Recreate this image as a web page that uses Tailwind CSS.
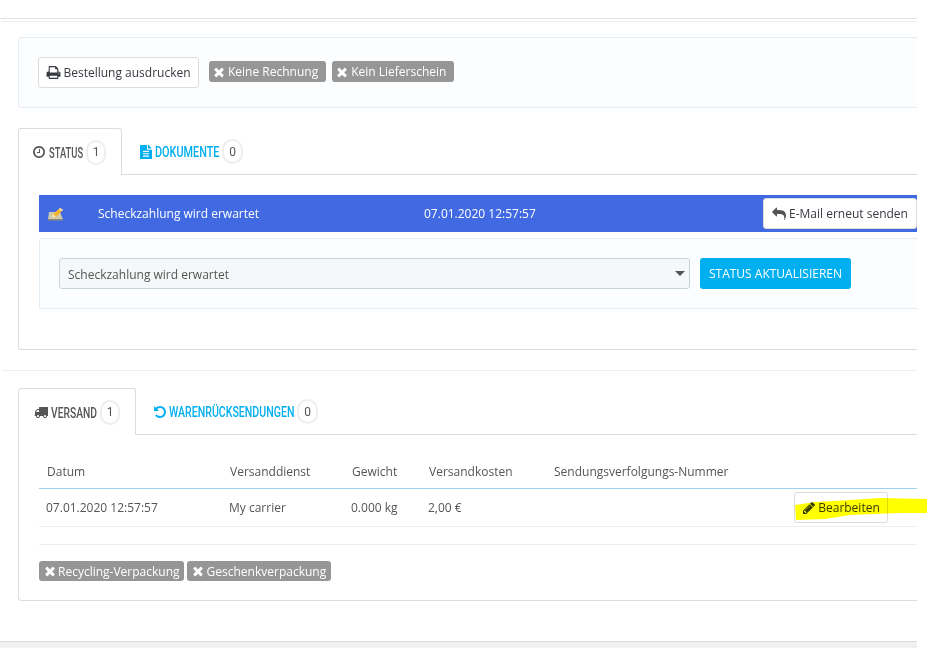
<!DOCTYPE html>
<html><head><meta charset="utf-8"><script src="https://cdn.jsdelivr.net/npm/@tailwindcss/browser@4"></script></head>
<body class="bg-white">
<div class="relative w-[927px] h-[648px] overflow-hidden bg-white font-['Open_Sans',sans-serif] text-[12px] text-[#555]">
<div class="w-[917px] h-[648px] overflow-hidden flex flex-col">
  <div class="mt-[18px] h-[1px] bg-[#e0e0e0] shrink-0"></div>
  <div class="mt-[2px] ml-[2px] h-[1px] bg-[#eeeeee] shrink-0"></div>

  <div class="mt-[15px] ml-[18px] w-[940px] h-[71px] shrink-0 flex items-start pl-[19px] pt-[19px] bg-[#fcfdfe] border border-[#e3ebf3] rounded-[3px]">
    <button class="h-[31px] w-[161px] flex items-center justify-center gap-[2px] bg-white border border-[#dcdcdc] rounded-[3px] text-[#363a41] leading-none">
      <svg class="w-[15px] h-[15px] fill-[#363a41]" viewBox="0 0 1792 1792"><path d="M448 1536h896v-256h-896v256zm0-640h896v-384h-160q-40 0-68-28t-28-68v-160h-640v640zm1152 64q0-26-19-45t-45-19-45 19-19 45 19 45 45 19 45-19 19-45zm128 0v416q0 13-9.5 22.5t-22.5 9.5h-224v160q0 40-28 68t-68 28h-960q-40 0-68-28t-28-68v-160h-224q-13 0-22.5-9.5t-9.5-22.5v-416q0-79 56.5-135.5t135.5-56.5h64v-544q0-40 28-68t68-28h672q40 0 88 20t76 48l152 152q28 28 48 76t20 88v256h64q79 0 135.5 56.5t56.5 135.5z"/></svg>
      Bestellung ausdrucken</button>
    <span class="ml-[10px] mt-[4px] h-[21px] flex items-center gap-[2px] pl-[3px] pr-[8px] bg-[#969696] rounded-[3px] text-white leading-none">
      <svg class="w-[14px] h-[14px] fill-white" viewBox="0 0 1792 1792"><path d="M1490 1322q0 40-28 68l-136 136q-28 28-68 28t-68-28l-294-294-294 294q-28 28-68 28t-68-28l-136-136q-28-28-28-68t28-68l294-294-294-294q-28-28-28-68t28-68l136-136q28-28 68-28t68 28l294 294 294-294q28-28 68-28t68 28l136 136q28 28 28 68t-28 68l-294 294 294 294q28 28 28 68z"/></svg>Keine Rechnung</span>
    <span class="ml-[6px] mt-[4px] h-[21px] flex items-center gap-[2px] pl-[3px] pr-[8px] bg-[#969696] rounded-[3px] text-white leading-none">
      <svg class="w-[14px] h-[14px] fill-white" viewBox="0 0 1792 1792"><path d="M1490 1322q0 40-28 68l-136 136q-28 28-68 28t-68-28l-294-294-294 294q-28 28-68 28t-68-28l-136-136q-28-28-28-68t28-68l294-294-294-294q-28-28-28-68t28-68l136-136q28-28 68-28t68 28l294 294 294-294q28-28 68-28t68 28l136 136q28 28 28 68t-28 68l-294 294 294 294q28 28 28 68z"/></svg>Kein Lieferschein</span>
  </div>

  <div class="mt-[20px] ml-[18px] w-[920px] h-[47px] shrink-0 flex items-end border-b border-[#dcdcdc] font-['Roboto',sans-serif] font-medium text-[14px]">
    <div class="h-[47px] w-[104px] -mb-[1px] pl-[13px] flex items-center gap-[3px] bg-white border border-b-0 border-[#dcdcdc] rounded-t-[3px] text-[#555]">
      <svg class="w-[14px] h-[14px] fill-[#555]" viewBox="0 0 1792 1792"><path d="M1024 544v448q0 14-9 23t-23 9h-320q-14 0-23-9t-9-23v-64q0-14 9-23t23-9h224v-352q0-14 9-23t23-9h64q14 0 23 9t9 23zm416 352q0-148-73-273t-198-198-273-73-273 73-198 198-73 273 73 273 198 198 273 73 273-73 198-198 73-273zm224 0q0 209-103 385.5t-279.5 279.5-385.5 103-385.5-103-279.5-279.5-103-385.5 103-385.5 279.5-279.5 385.5-103 385.5 103 279.5 279.5 103 385.5z"/></svg>
      <span class="w-[34px] pt-[2px] whitespace-nowrap origin-left scale-x-[0.67]">STATUS</span>
      <span class="w-[20px] h-[25px] flex items-center justify-center rounded-full border-2 border-[#eeeeee] text-[12px] font-normal">1</span>
    </div>
    <div class="h-[47px] -mb-[1px] pl-[18px] flex items-center gap-[3px] text-[#00aff0]">
      <svg class="w-[12px] h-[14px] fill-[#00aff0]" viewBox="128 128 1536 1536" preserveAspectRatio="none"><path d="M1596 476q14 14 28 36h-472v-472q22 14 36 28zm-476 164h544v1056q0 40-28 68t-68 28h-1344q-40 0-68-28t-28-68v-1600q0-40 28-68t68-28h800v544q0 40 28 68t68 28zm160 736v-64q0-14-9-23t-23-9h-704q-14 0-23 9t-9 23v64q0 14 9 23t23 9h704q14 0 23-9t9-23zm0-256v-64q0-14-9-23t-23-9h-704q-14 0-23 9t-9 23v64q0 14 9 23t23 9h704q14 0 23-9t9-23zm0-256v-64q0-14-9-23t-23-9h-704q-14 0-23 9t-9 23v64q0 14 9 23t23 9h704q14 0 23-9t9-23z"/></svg>
      <span class="w-[64px] pt-[2px] whitespace-nowrap origin-left scale-x-[0.775]">DOKUMENTE</span>
      <span class="w-[21px] h-[25px] flex items-center justify-center rounded-full border-2 border-[#eeeeee] text-[#555] text-[12px] font-normal">0</span>
    </div>
  </div>
  <div class="ml-[18px] w-[920px] h-[175px] shrink-0 px-[20px] pt-[20px] bg-white border-l border-b border-[#dcdcdc] rounded-bl-[3px]">
    <div class="h-[37px] flex items-center bg-[#4169e1] text-white relative">
      <svg class="ml-[8px] w-[17px] h-[14px]" viewBox="0 0 17 14"><path d="M2 5h11l3 7.500H1z" fill="#cfc9ae"/><path d="M1 12h15v1.500H1z" fill="#8d8a78"/><path d="M5 10l1-3 7-6 3 2-7 7z" fill="#f2b632"/><path d="M5 10l1-3 3 3z" fill="#fde9b5"/><path d="M13 1l3 2-1 1-3-2z" fill="#f5e6c8"/></svg>
      <span class="ml-[34px] w-[326px]">Scheckzahlung wird erwartet</span>
      <span>07.01.2020 12:57:57</span>
      <button class="absolute right-[1px] top-[3px] w-[154px] h-[31px] flex items-center justify-center gap-[3px] bg-white border border-[#dcdcdc] rounded-[3px] text-[#363a41] leading-none">
        <svg class="w-[14px] h-[14px] fill-[#555]" viewBox="0 0 1792 1792"><path d="M1792 1120q0 166-127 451-3 7-10.500 24t-13.500 30-13 22q-12 17-28 17-15 0-23.500-10t-8.500-25q0-9 2.500-26.500t2.500-23.500q5-68 5-123 0-101-17.500-181t-48.500-138.500-80-101-105.500-69.500-133-42.500-154-21.500-175.500-6h-224v256q0 26-19 45t-45 19-45-19l-512-512q-19-19-19-45t19-45l512-512q19-19 45-19t45 19 19 45v256h224q713 0 875 403 53 134 53 333z"/></svg>
        E-Mail erneut senden</button>
    </div>
    <div class="mt-[6px] h-[71px] flex items-start pl-[19px] pt-[19px] bg-[#fcfdfe] border border-[#e3ebf3] rounded-t-[3px]">
      <div class="w-[631px] h-[31px] flex items-center justify-between pl-[8px] pr-[4px] bg-[#f5f8f9] border border-[#c7d6db] rounded-[3px] text-[#555]">
        <span class="pt-[2px]">Scheckzahlung wird erwartet</span>
        <span class="w-0 h-0 border-x-[5px] border-x-transparent border-t-[5px] border-t-[#555]"></span>
      </div>
      <button class="ml-[10px] w-[151px] h-[31px] flex items-center justify-center bg-[#00aff0] rounded-[3px] text-white leading-none">STATUS AKTUALISIEREN</button>
    </div>
  </div>

  <div class="mt-[20px] h-[1px] bg-[#eeeeee] ml-[2px] shrink-0"></div>

  <div class="mt-[17px] ml-[18px] w-[920px] h-[47px] shrink-0 flex items-end border-b border-[#dcdcdc] font-['Roboto',sans-serif] font-medium text-[14px]">
    <div class="h-[47px] w-[118px] -mb-[1px] pl-[15px] flex items-center gap-[3px] bg-white border border-b-0 border-[#dcdcdc] rounded-t-[3px] text-[#555]">
      <svg class="w-[14px] h-[14px] fill-[#555]" viewBox="0 0 1792 1792"><path d="M640 1408q0-52-38-90t-90-38-90 38-38 90 38 90 90 38 90-38 38-90zm-384-512h384v-256h-158q-13 0-22 9l-195 195q-9 9-9 22v30zm1280 512q0-52-38-90t-90-38-90 38-38 90 38 90 90 38 90-38 38-90zm256-1088v1024q0 15-4 26.500t-13.500 18.500-16.500 11.500-23.500 6-22.500 2-25.500 0-22.500-.5q0 106-75 181t-181 75-181-75-75-181h-384q0 106-75 181t-181 75-181-75-75-181h-64q-3 0-22.500.5t-25.500 0-22.500-2-23.500-6-16.500-11.500-13.500-18.500-4-26.500q0-26 19-45t45-19v-320q0-8-.5-35t0-38 2.500-34.500 6.500-37 14-30.500 22.500-30l198-198q19-19 50.500-32t58.500-13h160v-192q0-26 19-45t45-19h1024q26 0 45 19t19 45z"/></svg>
      <span class="w-[46px] pt-[2px] whitespace-nowrap origin-left scale-x-[0.735]">VERSAND</span>
      <span class="w-[20px] h-[25px] flex items-center justify-center rounded-full border-2 border-[#eeeeee] text-[12px] font-normal">1</span>
    </div>
    <div class="h-[47px] -mb-[1px] pl-[18px] flex items-center gap-[3px] text-[#00aff0]">
      <svg class="w-[12px] h-[12px] fill-[#00aff0]" viewBox="128 128 1536 1536"><path d="M1664 896q0 156-61 298t-164 245-245 164-298 61q-172 0-327-72.500t-264-204.500q-7-10-6.500-22.500t8.500-20.500l137-138q10-9 25-9 16 2 23 12 73 95 179 147t225 52q104 0 198.500-40.500t163.500-109.500 109.500-163.500 40.500-198.500-40.500-198.500-109.500-163.500-163.500-109.500-198.500-40.500q-98 0-188 35.500t-160 101.500l137 138q31 30 14 69-17 40-59 40h-448q-26 0-45-19t-19-45v-448q0-42 40-59 39-17 69 14l130 129q107-101 244.500-156.500t284.500-55.500q156 0 298 61t245 164 164 245 61 298z"/></svg>
      <span class="w-[126px] pt-[2px] whitespace-nowrap origin-left scale-x-[0.756]">WARENRÜCKSENDUNGEN</span>
      <span class="-ml-[1px] w-[21px] h-[25px] flex items-center justify-center rounded-full border-2 border-[#eeeeee] text-[#555] text-[12px] font-normal">0</span>
    </div>
  </div>
  <div class="ml-[18px] w-[920px] h-[166px] shrink-0 pl-[20px] pr-[21px] bg-white border-l border-b border-[#dcdcdc] rounded-bl-[3px]">
    <table class="w-[878px] table-fixed mt-[17px]">
      <thead><tr class="h-[36px]">
        <th class="w-[183px] pl-[8px] pt-[5px] text-left font-normal border-b border-[#9cd3ee]">Datum</th>
        <th class="w-[122px] pl-[8px] pt-[5px] text-left font-normal border-b border-[#9cd3ee]">Versanddienst</th>
        <th class="w-[77px] pl-[8px] pt-[5px] text-left font-normal border-b border-[#9cd3ee]">Gewicht</th>
        <th class="w-[126px] pl-[8px] pt-[5px] text-left font-normal border-b border-[#9cd3ee]">Versandkosten</th>
        <th class="w-[240px] pl-[7px] pt-[5px] text-left font-normal border-b border-[#9cd3ee]">Sendungsverfolgungs-Nummer</th>
        <th class="border-b border-[#9cd3ee]"></th>
      </tr></thead>
      <tbody><tr class="h-[38px]">
        <td class="pl-[7px] pt-[2px] border-b border-[#eeeeee]">07.01.2020 12:57:57</td>
        <td class="pl-[7px] pt-[2px] border-b border-[#eeeeee]">My carrier</td>
        <td class="pl-[7px] pt-[2px] border-b border-[#eeeeee]">0.000 kg</td>
        <td class="pl-[7px] pt-[2px] border-b border-[#eeeeee]">2,00 €</td>
        <td class="border-b border-[#eeeeee]"></td>
        <td class="pl-[7px] border-b border-[#eeeeee]"><button class="w-[94px] h-[31px] flex items-center justify-center gap-[2px] pt-[2px] bg-white border border-[#dcdcdc] rounded-[3px] text-[#363a41] leading-none">
          <svg class="w-[14px] h-[14px] fill-[#363a41]" viewBox="0 0 1792 1792"><path d="M491 1536l91-91-235-235-91 91v107h128v128h107zm523-928q0-22-22-22-10 0-17 7l-542 542q-7 7-7 17 0 22 22 22 10 0 17-7l542-542q7-7 7-17zm-54-192l416 416-832 832h-416v-416zm683 96q0 53-37 90l-166 166-416-416 166-165q36-38 90-38 53 0 91 38l235 234q37 39 37 91z"/></svg>Bearbeiten</button></td>
      </tr></tbody>
    </table>
    <div class="mt-[17px] h-[1px] bg-[#eeeeee]"></div>
    <div class="mt-[16px] flex gap-[3px]">
      <span class="h-[20px] flex items-center gap-[1px] pl-[4px] pr-[4px] bg-[#969696] rounded-[3px] text-white leading-none">
        <svg class="w-[14px] h-[14px] fill-white" viewBox="0 0 1792 1792"><path d="M1490 1322q0 40-28 68l-136 136q-28 28-68 28t-68-28l-294-294-294 294q-28 28-68 28t-68-28l-136-136q-28-28-28-68t28-68l294-294-294-294q-28-28-28-68t28-68l136-136q28-28 68-28t68 28l294 294 294-294q28-28 68-28t68 28l136 136q28 28 28 68t-28 68l-294 294 294 294q28 28 28 68z"/></svg><span class="pt-[2px]">Recycling-Verpackung</span></span>
      <span class="h-[20px] flex items-center gap-[2px] pl-[4px] pr-[5px] bg-[#969696] rounded-[3px] text-white leading-none">
        <svg class="w-[14px] h-[14px] fill-white" viewBox="0 0 1792 1792"><path d="M1490 1322q0 40-28 68l-136 136q-28 28-68 28t-68-28l-294-294-294 294q-28 28-68 28t-68-28l-136-136q-28-28-28-68t28-68l294-294-294-294q-28-28-28-68t28-68l136-136q28-28 68-28t68 28l294 294 294-294q28-28 68-28t68 28l136 136q28 28 28 68t-28 68l-294 294 294 294q28 28 28 68z"/></svg><span class="pt-[2px]">Geschenkverpackung</span></span>
    </div>
  </div>
  <div class="mt-[40px] h-[1px] bg-[#dcdcdc] shrink-0"></div>
  <div class="grow bg-[#f0f1f3]"></div>
</div>
<svg class="absolute left-0 top-0 w-[927px] h-[648px] mix-blend-multiply pointer-events-none" viewBox="0 0 927 648"><path d="M795 505L815 502C840 501 860 499 880 498L927 499V513L900 513L850 515L825 519L796 520Z" fill="#ffff00"/></svg>
</div>
</body></html>
